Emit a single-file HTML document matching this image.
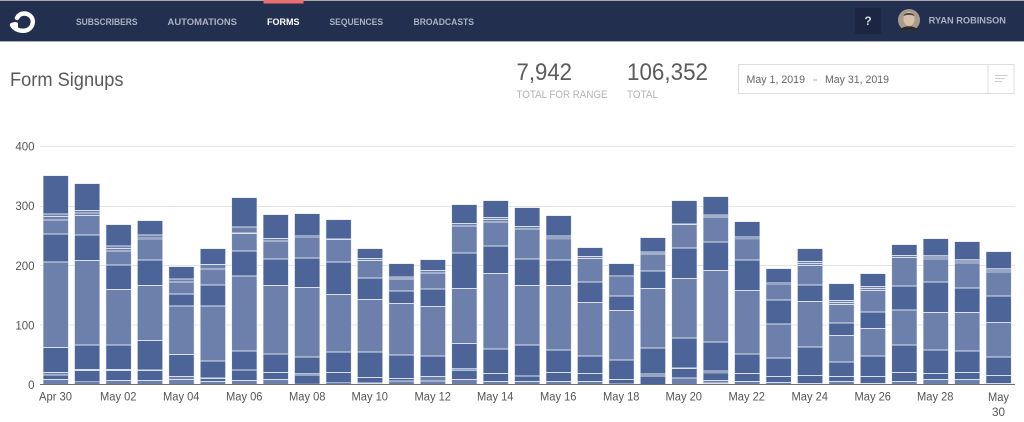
<!DOCTYPE html>
<html>
<head>
<meta charset="utf-8">
<style>
html,body{margin:0;padding:0;background:#fff;width:1024px;height:422px;overflow:hidden}
svg{display:block;font-family:"Liberation Sans",sans-serif;filter:blur(.3px)}
.b,.d,.l,.m{fill:none;stroke-width:25.5}
.b{stroke:#d9dfec}
.d{stroke:#4c6497;stroke-width:24.6}
.l{stroke:#6d80ab;stroke-width:24.6}
.m{stroke:#98a6c5;stroke-width:24.6}
.n{font-size:9px;font-weight:bold;fill:#aab1c2}
.x{font-size:11.5px;fill:#555}
.y{font-size:11.5px;fill:#555}
.big{font-size:24px;fill:#5c5c5c}
.sm{font-size:11px;fill:#b4b4b4}
.dt{font-size:11px;fill:#666}
</style>
</head>
<body>
<svg width="1024" height="422" viewBox="0 0 1024 422" xmlns="http://www.w3.org/2000/svg">
<rect width="1024" height="422" fill="#fff"/>
<!-- header -->
<rect y="0" width="1024" height="42" fill="#232f4f"/>
<rect y="0" width="1024" height="1" fill="#a9a9ab"/>
<rect y="41" width="1024" height="1" fill="#a8aebb"/>
<rect x="263.5" y="0" width="40" height="3.5" fill="#ea7070"/>
<path d="M17 18C18.5 15 21 13.5 24 13.5C29 13.5 32.8 17 32.8 21.5C32.8 27 28.5 30.8 23 30.8C18 30.8 14 28.500 12 25" fill="none" stroke="#fff" stroke-width="4.4" stroke-linecap="round"/>
<path d="M10 25C12 22 15 21 18 23L18 28L12 28Z" fill="#fff"/>
<text class="n" x="76" y="25" textLength="61.5" lengthAdjust="spacingAndGlyphs">SUBSCRIBERS</text>
<text class="n" x="167.5" y="25" textLength="69.5" lengthAdjust="spacingAndGlyphs">AUTOMATIONS</text>
<text class="n" x="267" y="25" textLength="32.5" lengthAdjust="spacingAndGlyphs" style="fill:#fff">FORMS</text>
<text class="n" x="329.5" y="25" textLength="53.5" lengthAdjust="spacingAndGlyphs">SEQUENCES</text>
<text class="n" x="413.5" y="25" textLength="60.5" lengthAdjust="spacingAndGlyphs">BROADCASTS</text>
<rect x="855" y="8" width="26" height="26" fill="#1c2642"/>
<text x="868" y="25" text-anchor="middle" font-size="12" font-weight="bold" fill="#d5d8e0">?</text>
<circle cx="909" cy="20" r="11" fill="#a89a8c"/>
<ellipse cx="909" cy="19" rx="5.6" ry="7" fill="#d8bfa9"/>
<path d="M903.5 16C904 12 914 12 914.500 16C911 14.500 907 14.500 903.500 16Z" fill="#4d4540"/>
<path d="M901 29C904 25.500 914 25.500 917 29C914 31.500 904 31.500 901 29Z" fill="#2a2a2c"/>
<text class="n" x="928.700" y="23.500" textLength="77.300" lengthAdjust="spacingAndGlyphs">RYAN ROBINSON</text>
<!-- title area -->
<text x="10" y="86" font-size="19" fill="#5a5a5a" textLength="113.500" lengthAdjust="spacingAndGlyphs">Form Signups</text>
<text class="big" x="516.500" y="80" textLength="55.500" lengthAdjust="spacingAndGlyphs">7,942</text>
<text class="big" x="627" y="80" textLength="81" lengthAdjust="spacingAndGlyphs">106,352</text>
<text class="sm" x="516.500" y="98" textLength="91" lengthAdjust="spacingAndGlyphs">TOTAL FOR RANGE</text>
<text class="sm" x="627" y="98" textLength="31" lengthAdjust="spacingAndGlyphs">TOTAL</text>
<rect x="738.500" y="64.500" width="275.500" height="29" fill="#fff" stroke="#ddd"/>
<rect x="987.500" y="64.500" width="1" height="29" fill="#ddd"/>
<text class="dt" x="746.500" y="83" textLength="58.500" lengthAdjust="spacingAndGlyphs">May 1, 2019</text>
<rect x="813" y="79.500" width="4" height="1" fill="#aaa"/>
<text class="dt" x="825" y="83" textLength="64" lengthAdjust="spacingAndGlyphs">May 31, 2019</text>
<rect x="995" y="75" width="12.500" height="1" fill="#ccc"/>
<rect x="995" y="78" width="10" height="1" fill="#ccc"/>
<rect x="995" y="81" width="7" height="1" fill="#ccc"/>
<!-- grid -->
<rect x="40" y="146" width="975" height="1" fill="#e4e4e4"/>
<rect x="40" y="206" width="975" height="1" fill="#e4e4e4"/>
<rect x="40" y="265" width="975" height="1" fill="#e4e4e4"/>
<rect x="40" y="324.500" width="975" height="1" fill="#e4e4e4"/>
<text class="y" x="34.500" y="150.500" text-anchor="end">400</text>
<text class="y" x="34.500" y="210" text-anchor="end">300</text>
<text class="y" x="34.500" y="270" text-anchor="end">200</text>
<text class="y" x="34.500" y="329.500" text-anchor="end">100</text>
<text class="y" x="34.500" y="389" text-anchor="end">0</text>
<!-- bars -->
<g transform="translate(55.750)"><path class="b" d="M0 175.500V384"/><path class="d" d="M0 176V213.500M0 234.500V261.500M0 348V372M0 375.500V379"/><path class="l" d="M0 214.500V216M0 217V219.500M0 220.500V233.500M0 262.500V347M0 373V374.500M0 380V384"/></g>
<g transform="translate(87.180)"><path class="b" d="M0 183.500V384"/><path class="d" d="M0 184V210M0 235.500V260M0 345.500V369M0 371V381"/><path class="l" d="M0 211V212.500M0 213.500V215M0 216V234.500M0 261V344.500M0 381.500V384"/></g>
<g transform="translate(118.610)"><path class="b" d="M0 224.500V384"/><path class="d" d="M0 225V245.500M0 265.500V289M0 345.500V369M0 371V380"/><path class="l" d="M0 246.500V248M0 249V250.500M0 251.500V264.500M0 290V344.500M0 381V384"/></g>
<g transform="translate(150.040)"><path class="b" d="M0 220.500V384"/><path class="d" d="M0 221V234.500M0 260.500V285M0 341V369.500M0 371V380"/><path class="l" d="M0 235.500V237M0 240V259.500M0 286V340M0 381V384"/><path class="m" d="M0 237V240"/></g>
<g transform="translate(181.470)"><path class="b" d="M0 266.500V384"/><path class="d" d="M0 267V278.500M0 294.500V305.500M0 355V376"/><path class="l" d="M0 279.500V281.500M0 282.500V293.500M0 306.500V354M0 377V379M0 380V384"/></g>
<g transform="translate(212.900)"><path class="b" d="M0 248.500V384"/><path class="d" d="M0 249V264M0 285.500V305.500M0 361.500V377.500M0 379V381"/><path class="l" d="M0 265V268.500M0 269.500V284.500M0 306.500V360.500M0 382V384"/></g>
<g transform="translate(244.330)"><path class="b" d="M0 197.500V384"/><path class="d" d="M0 198V226.500M0 251.500V275.500M0 351.500V369.500M0 370.500V380"/><path class="l" d="M0 227.500V232.500M0 234V250.500M0 276.500V350.500M0 381V384"/></g>
<g transform="translate(275.760)"><path class="b" d="M0 214.500V384"/><path class="d" d="M0 215V238M0 259.500V285M0 354.500V372M0 373V379"/><path class="l" d="M0 239V240.500M0 241.500V258.500M0 286V353.500M0 380V384"/></g>
<g transform="translate(307.190)"><path class="b" d="M0 213.500V384"/><path class="d" d="M0 214V235M0 258.500V287M0 357.500V373M0 376V383"/><path class="l" d="M0 238V257.500M0 288V356.500M0 383V384"/><path class="m" d="M0 235V238M0 373.500V376"/></g>
<g transform="translate(338.620)"><path class="b" d="M0 219.500V384"/><path class="d" d="M0 220V238.500M0 262.500V294M0 352.500V372M0 373V382"/><path class="l" d="M0 240V261.500M0 295V351.500M0 382.500V384"/></g>
<g transform="translate(370.050)"><path class="b" d="M0 248.500V384"/><path class="d" d="M0 249V258M0 278.500V299M0 352.500V377M0 378V382.500"/><path class="l" d="M0 259V260M0 261V277.500M0 300V351.500"/></g>
<g transform="translate(401.480)"><path class="b" d="M0 263.500V384"/><path class="d" d="M0 264V276.500M0 291.500V303M0 355.500V378M0 379V380.500"/><path class="l" d="M0 277.500V278.500M0 279.500V290.500M0 304V354.500M0 381.500V384"/></g>
<g transform="translate(432.910)"><path class="b" d="M0 259.500V384"/><path class="d" d="M0 260V270M0 289.500V306M0 356.500V376"/><path class="l" d="M0 271V272.500M0 273.500V288.500M0 307V355.500M0 377V380.500M0 381.500V384"/></g>
<g transform="translate(464.340)"><path class="b" d="M0 204.500V384"/><path class="d" d="M0 205V223M0 253.500V288M0 344V368M0 371V379"/><path class="l" d="M0 224V225.500M0 226.500V252.500M0 289V343M0 380V384"/><path class="m" d="M0 368.500V370.500"/></g>
<g transform="translate(495.770)"><path class="b" d="M0 200.500V384"/><path class="d" d="M0 201V217M0 246.500V273M0 349.500V373M0 374V381"/><path class="l" d="M0 218V219M0 220V221.500M0 222.500V245.500M0 274V348.500M0 382V384"/></g>
<g transform="translate(527.200)"><path class="b" d="M0 207.500V384"/><path class="d" d="M0 208V226M0 259.500V285M0 345.500V375.500M0 376.500V381"/><path class="l" d="M0 227V228.500M0 229.500V258.500M0 286V344.500M0 382V384"/></g>
<g transform="translate(558.630)"><path class="b" d="M0 215.500V384"/><path class="d" d="M0 216V235M0 260.500V285M0 350.500V372M0 373V381"/><path class="l" d="M0 239.500V259.500M0 286V349.500M0 382V384"/><path class="m" d="M0 235V239.500"/></g>
<g transform="translate(590.060)"><path class="b" d="M0 247.500V384"/><path class="d" d="M0 248V256M0 282.500V302M0 356.500V373M0 374V381"/><path class="l" d="M0 257V258M0 259V281.500M0 303V355.500M0 382V384"/></g>
<g transform="translate(621.490)"><path class="b" d="M0 263.500V384"/><path class="d" d="M0 264V275M0 296.500V310M0 360.500V379M0 380V383.500"/><path class="l" d="M0 277V295.500M0 311V359.500"/><path class="m" d="M0 275V277"/></g>
<g transform="translate(652.920)"><path class="b" d="M0 237.500V384"/><path class="d" d="M0 238V251.500M0 271.500V288M0 348.500V373M0 377V384"/><path class="l" d="M0 252.500V253.500M0 254.500V270.500M0 289V347.500"/><path class="m" d="M0 373V377"/></g>
<g transform="translate(684.350)"><path class="b" d="M0 200.500V384"/><path class="d" d="M0 201V223.500M0 248.500V278M0 338.500V367.500M0 369V377.500"/><path class="l" d="M0 225V247.500M0 279V337.500M0 378.500V384"/></g>
<g transform="translate(715.780)"><path class="b" d="M0 196.500V384"/><path class="d" d="M0 197V214.500M0 242.500V270M0 342.500V370.500M0 373.500V380"/><path class="l" d="M0 215.500V216.500M0 217.500V241.500M0 271V341.500M0 381V382.500"/><path class="m" d="M0 371V373.500"/></g>
<g transform="translate(747.210)"><path class="b" d="M0 221.500V384"/><path class="d" d="M0 222V236M0 260.500V290M0 354.500V373M0 374V381"/><path class="l" d="M0 239.500V259.500M0 291V353.500M0 382V384"/><path class="m" d="M0 236V239.500"/></g>
<g transform="translate(778.640)"><path class="b" d="M0 268.500V384"/><path class="d" d="M0 269V282M0 300.500V323.500M0 358.500V376M0 377V382"/><path class="l" d="M0 285V299.500M0 324.500V357.500M0 383V384"/><path class="m" d="M0 282V285"/></g>
<g transform="translate(810.070)"><path class="b" d="M0 248.500V384"/><path class="d" d="M0 249V261M0 285.500V301M0 347.500V375M0 376V383"/><path class="l" d="M0 262V263M0 264V265M0 266V284.500M0 302V346.500"/></g>
<g transform="translate(841.500)"><path class="b" d="M0 283.500V384"/><path class="d" d="M0 284V300M0 323.500V335M0 362.500V376M0 377V381"/><path class="l" d="M0 301V302M0 303V304M0 305V322.500M0 336V361.500M0 382V384"/></g>
<g transform="translate(872.930)"><path class="b" d="M0 273.500V384"/><path class="d" d="M0 274V286M0 312.500V328M0 356.500V376M0 377V383"/><path class="l" d="M0 287V288M0 289V290M0 291V311.500M0 329V355.500"/></g>
<g transform="translate(904.360)"><path class="b" d="M0 244.500V384"/><path class="d" d="M0 245V255M0 286.500V309.500M0 345.500V372M0 373V381"/><path class="l" d="M0 256V257M0 258V285.500M0 310.500V344.500M0 382V384"/></g>
<g transform="translate(935.790)"><path class="b" d="M0 238.500V384"/><path class="d" d="M0 239V255M0 282.500V312M0 350.500V373M0 374V379"/><path class="l" d="M0 260V281.500M0 313V349.500M0 380V384"/><path class="m" d="M0 255.500V260"/></g>
<g transform="translate(967.220)"><path class="b" d="M0 241.500V384"/><path class="d" d="M0 242V259M0 288.500V312M0 351.500V372M0 373V379"/><path class="l" d="M0 264V287.500M0 313V350.500M0 380V384"/><path class="m" d="M0 259.500V264"/></g>
<g transform="translate(998.650)"><path class="b" d="M0 251.500V384"/><path class="d" d="M0 252V268M0 296.500V322M0 357.500V375M0 376V383"/><path class="l" d="M0 273V295.500M0 323V356.500"/><path class="m" d="M0 268.500V273"/></g>
<rect x="40" y="384" width="975" height="1" fill="#6f6f6f"/>
<!-- x labels -->
<text class="x" x="39" y="400.500" textLength="33" lengthAdjust="spacingAndGlyphs">Apr 30</text>
<text class="x" x="100" y="400.500" textLength="36.500" lengthAdjust="spacingAndGlyphs">May 02</text>
<text class="x" x="163" y="400.500" textLength="36.500" lengthAdjust="spacingAndGlyphs">May 04</text>
<text class="x" x="226" y="400.500" textLength="36.500" lengthAdjust="spacingAndGlyphs">May 06</text>
<text class="x" x="289" y="400.500" textLength="36.500" lengthAdjust="spacingAndGlyphs">May 08</text>
<text class="x" x="351.500" y="400.500" textLength="36.500" lengthAdjust="spacingAndGlyphs">May 10</text>
<text class="x" x="414.500" y="400.500" textLength="36.500" lengthAdjust="spacingAndGlyphs">May 12</text>
<text class="x" x="477" y="400.500" textLength="36.500" lengthAdjust="spacingAndGlyphs">May 14</text>
<text class="x" x="540" y="400.500" textLength="36.500" lengthAdjust="spacingAndGlyphs">May 16</text>
<text class="x" x="603" y="400.500" textLength="36.500" lengthAdjust="spacingAndGlyphs">May 18</text>
<text class="x" x="665.500" y="400.500" textLength="36.500" lengthAdjust="spacingAndGlyphs">May 20</text>
<text class="x" x="728.500" y="400.500" textLength="36.500" lengthAdjust="spacingAndGlyphs">May 22</text>
<text class="x" x="791.500" y="400.500" textLength="36.500" lengthAdjust="spacingAndGlyphs">May 24</text>
<text class="x" x="854.500" y="400.500" textLength="36.500" lengthAdjust="spacingAndGlyphs">May 26</text>
<text class="x" x="917" y="400.500" textLength="36.500" lengthAdjust="spacingAndGlyphs">May 28</text>
<text class="x" x="988" y="401" textLength="21" lengthAdjust="spacingAndGlyphs">May</text>
<text class="x" x="992" y="416" textLength="13" lengthAdjust="spacingAndGlyphs">30</text>
</svg>
</body>
</html>
